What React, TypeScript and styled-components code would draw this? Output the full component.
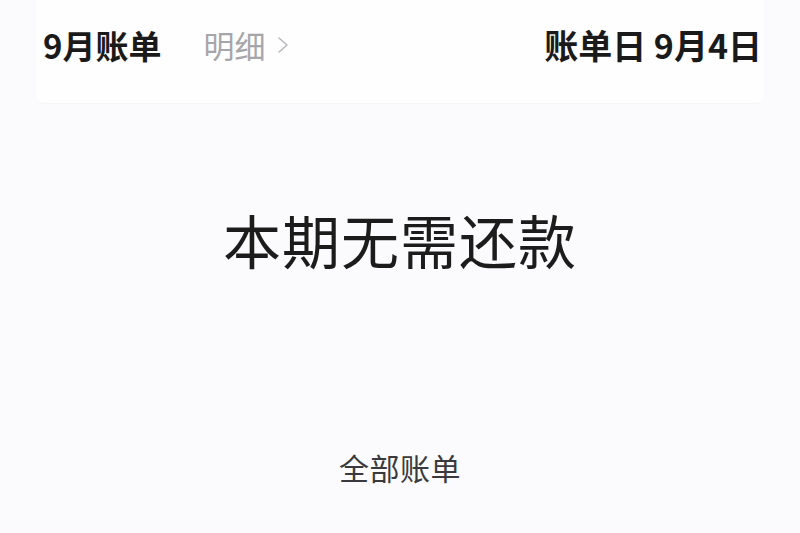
import React from "react";
import styled, { createGlobalStyle } from "styled-components";

const Global = createGlobalStyle`
  html, body { margin: 0; padding: 0; background: #fbfbfd; }
  body { font-family: "Noto Sans CJK SC", "Noto Sans", sans-serif; }
`;

const Page = styled.div`
  width: 800px;
  height: 533px;
  background: #fbfbfd;
  display: flex;
  flex-direction: column;
  overflow: hidden;
`;

const HeaderCard = styled.div`
  margin: 0 36px;
  height: 104px;
  background: #fefeff;
  border-bottom: 1px solid #f6f6f9;
  border-radius: 0 0 8px 8px;
  display: flex;
  align-items: flex-start;
  justify-content: space-between;
  padding: 22px 2px 0 7px;
  box-sizing: border-box;
`;

const Left = styled.div`
  display: flex;
  align-items: center;
  gap: 42px;
`;

const Title = styled.div`
  font-size: 33px;
  font-weight: 700;
  color: #1a1a1a;
  line-height: 46px;
`;

const DetailLink = styled.div`
  display: flex;
  align-items: center;
  gap: 12px;
  font-size: 31px;
  font-weight: 400;
  color: #a6a6aa;
  line-height: 46px;
`;

const BillDate = styled.div`
  font-size: 34px;
  font-weight: 700;
  color: #1a1a1a;
  line-height: 46px;
`;

const Body = styled.div`
  flex: 1;
  display: flex;
  flex-direction: column;
  align-items: center;
`;

const Notice = styled.div`
  margin-top: 95px;
  font-size: 58px;
  font-weight: 400;
  color: #1c1c1c;
  line-height: 80px;
  letter-spacing: 1px;
`;

const AllBills = styled.div`
  margin-top: 168px;
  font-size: 30px;
  font-weight: 400;
  color: #3a3a3e;
  line-height: 40px;
  letter-spacing: 0.5px;
`;

const Chevron = () => (
  <svg width="12" height="20" viewBox="0 0 12 20" fill="none">
    <path d="M2 3 L10 10 L2 17" stroke="#b8b8bc" strokeWidth="1.6" strokeLinecap="round" strokeLinejoin="round" />
  </svg>
);

export default function App() {
  return (
    <Page>
      <Global />
      <HeaderCard>
        <Left>
          <Title>9月账单</Title>
          <DetailLink>
            明细
            <Chevron />
          </DetailLink>
        </Left>
        <BillDate>账单日 9月4日</BillDate>
      </HeaderCard>
      <Body>
        <Notice>本期无需还款</Notice>
        <AllBills>全部账单</AllBills>
      </Body>
    </Page>
  );
}
